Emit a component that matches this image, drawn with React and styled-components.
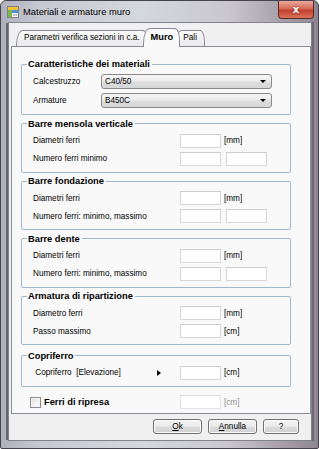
import React from 'react';
import styled, { createGlobalStyle } from 'styled-components';

const GlobalStyle = createGlobalStyle`
    html, body {
        margin: 0;
        padding: 0;
        background: #ffffff;
    }
    body {
        font-family: "Liberation Sans", Arial, sans-serif;
        font-size: 8.2px;
        color: #000;
    }
`;

const Window = styled.div`
    box-sizing: border-box;
    width: 319px;
    height: 449px;
    display: flex;
    flex-direction: column;
    padding: 0 6px 7px 7px;
    border: 1px solid #45444e;
    border-radius: 6px 6px 2px 2px;
    background: linear-gradient(90deg, #aeb1bc 0%, #c6c9d2 12%, #d5d7de 45%, #c9c6ce 72%, #8f8592 100%);
`;

const TitleBar = styled.div`
    display: flex;
    align-items: center;
    height: 21px;
    margin: 0 -6px 0 -7px;
    padding-left: 6px;
`;

const Title = styled.span`
    margin-left: 4px;
    font-size: 9.4px;
    color: #000;
`;

const CloseButton = styled.div`
    align-self: flex-start;
    margin: 0 4px 0 auto;
    width: 36px;
    height: 18px;
    box-sizing: border-box;
    display: flex;
    align-items: center;
    justify-content: center;
    border: 1px solid #5b2a28;
    border-top: none;
    border-radius: 0 0 4px 4px;
    background: linear-gradient(180deg, #e9a99c 0%, #d66a57 45%, #c2402e 55%, #d9745a 100%);
    color: #fff;
    font-weight: bold;
    font-size: 10px;
    font-family: "DejaVu Sans", sans-serif;
    text-shadow: 0 0 2px #5a1a10;
`;

const Client = styled.div`
    flex: 1;
    display: flex;
    flex-direction: column;
    padding: 4px 1px 0 1px;
    border: 1px solid #80838d;
    background: #f0f0f0;
    box-shadow: -3px 0 0 -1px #6a6470, 2px 0 0 0 #6f6774;
`;

const TabStrip = styled.div`
    display: flex;
    align-items: flex-end;
    height: 19px;
    padding-left: 6px;
`;

const Tab = styled.div`
    position: relative;
    box-sizing: border-box;
    height: ${(p) => (p.active ? '19px' : '16px')};
    margin-left: ${(p) => (p.first ? '0' : '-5px')};
    margin-bottom: ${(p) => (p.active ? '-1px' : '0')};
    padding: ${(p) => (p.active ? '3px 6px 0 7px' : '2px 7px 0 7px')};
    z-index: ${(p) => (p.active ? 2 : 1)};
    border: 1px solid #898c95;
    border-bottom: none;
    border-top-left-radius: 7px 15px;
    border-top-right-radius: 5px 12px;
    background: ${(p) => (p.active ? '#f9f9f9' : 'linear-gradient(180deg, #fbfbfb, #e9e9e9)')};
    font-weight: ${(p) => (p.active ? 'bold' : 'normal')};
    font-size: ${(p) => (p.active ? '9.3px' : '8.2px')};
    white-space: nowrap;
`;

const TabPanel = styled.div`
    box-sizing: border-box;
    width: 300px;
    height: 368px;
    margin-left: 1px;
    padding: 11px 0 0 9px;
    display: flex;
    flex-direction: column;
    gap: 2.5px;
    border: 1px solid #898c95;
    background: #f9f9f9;
`;

const Group = styled.fieldset`
    box-sizing: border-box;
    width: 270px;
    margin: 0;
    margin-top: ${(p) => p.extra || 0}px;
    padding: 4px 0 6px 11px;
    border: 1px solid #9fb8d2;
    border-radius: 2px;
    display: flex;
    flex-direction: column;
    gap: ${(p) => p.rowGap || 4}px;
`;

const Legend = styled.legend`
    margin-left: -6px;
    padding: 0 2px 0 1px;
    font-weight: bold;
    font-size: 9.3px;
    line-height: 12px;
`;

const Row = styled.div`
    display: flex;
    align-items: center;
    height: ${(p) => p.h || 14}px;
`;

const Label = styled.span`
    display: flex;
    align-items: center;
    flex-shrink: 0;
    width: ${(p) => p.w || 147}px;
    white-space: nowrap;
`;

const Pointer = styled.span`
    margin: 0 19px 0 auto;
    width: 0;
    height: 0;
    border-top: 3px solid transparent;
    border-bottom: 3px solid transparent;
    border-left: 4px solid #000;
`;

const TextBox = styled.div`
    box-sizing: border-box;
    width: 41px;
    height: 14px;
    margin-right: ${(p) => (p.spaced ? '5px' : '0')};
    border: 1px solid ${(p) => (p.disabled ? '#e3e3e3' : '#d6d7d9')};
    border-top-color: ${(p) => (p.disabled ? '#dcdcdc' : '#cbcdd0')};
    background: #fff;
`;

const Unit = styled.span`
    margin-left: 3px;
    color: ${(p) => (p.disabled ? '#8e8e8e' : '#000')};
`;

const Combo = styled.div`
    position: relative;
    box-sizing: border-box;
    width: 171px;
    height: 15px;
    display: flex;
    align-items: center;
    padding-left: 3px;
    border: 1px solid #8a8a8a;
    border-radius: 3px;
    background: linear-gradient(180deg, #f6f6f6 0%, #ebebeb 48%, #dedede 52%, #d6d6d6 100%);

    &::after {
        content: '';
        position: absolute;
        right: 5px;
        top: 5px;
        border-left: 3px solid transparent;
        border-right: 3px solid transparent;
        border-top: 3px solid #000;
    }
`;

const CheckRow = styled.div`
    display: flex;
    align-items: center;
    height: 14px;
    margin-top: 6px;
    padding-left: 9px;
`;

const CheckWrap = styled.label`
    display: flex;
    align-items: center;
    width: 150px;
    flex-shrink: 0;
    font-weight: bold;
    font-size: 9.3px;
`;

const CheckBox = styled.span`
    box-sizing: border-box;
    width: 11px;
    height: 11px;
    margin-right: 3px;
    border: 1px solid #8f8f8f;
    background: linear-gradient(135deg, #dcdcdc 0%, #f4f4f4 60%, #ffffff 100%);
    box-shadow: inset 0 0 0 1px #f2f2f2;
`;

const ButtonBar = styled.div`
    display: flex;
    justify-content: flex-end;
    gap: 6px;
    padding: 5px 11px 0 0;
`;

const Button = styled.div`
    box-sizing: border-box;
    width: ${(p) => p.w}px;
    height: 15px;
    display: flex;
    align-items: center;
    justify-content: center;
    border: 1px solid #707070;
    border-radius: 3px;
    background: linear-gradient(180deg, #f2f2f2 0%, #ebebeb 48%, #dddddd 52%, #cfcfcf 100%);
    box-shadow: inset 0 0 0 1px #fbfbfb;
`;

const AppIcon = () => (
    <svg width="12" height="12" viewBox="0 0 12 12">
        <rect x="0.5" y="0.5" width="11" height="11" fill="#f4f4f4" stroke="#7d8088" />
        <rect x="1" y="1" width="10" height="3" fill="#f2c230" />
        <rect x="1" y="4" width="4" height="7" fill="#79b84a" />
        <rect x="5" y="4" width="6" height="3" fill="#4f8fd6" />
        <rect x="6" y="8" width="4" height="2" fill="#c0c4cc" />
    </svg>
);

const FieldRow = ({ label, units, pair }) => (
    <Row>
        <Label>{label}</Label>
        <TextBox spaced={pair} />
        {pair ? <TextBox /> : <Unit>{units}</Unit>}
    </Row>
);

const BAR_GROUPS = [
    { title: 'Barre mensola verticale', second: 'Numero ferri minimo' },
    { title: 'Barre fondazione', second: 'Numero ferri: minimo, massimo' },
    { title: 'Barre dente', second: 'Numero ferri: minimo, massimo' },
];

const App = () => {
    return (
        <>
            <GlobalStyle />
            <Window>
                <TitleBar>
                    <AppIcon />
                    <Title>Materiali e armature muro</Title>
                    <CloseButton>x</CloseButton>
                </TitleBar>
                <Client>
                    <TabStrip>
                        <Tab first>Parametri verifica sezioni in c.a.</Tab>
                        <Tab active>Muro</Tab>
                        <Tab>Pali</Tab>
                    </TabStrip>
                    <TabPanel>
                        <Group rowGap={4}>
                            <Legend>Caratteristiche dei materiali</Legend>
                            <Row h={15}>
                                <Label w={68}>Calcestruzzo</Label>
                                <Combo>C40/50</Combo>
                            </Row>
                            <Row h={15}>
                                <Label w={68}>Armature</Label>
                                <Combo>B450C</Combo>
                            </Row>
                        </Group>
                        {BAR_GROUPS.map((g) => (
                            <Group key={g.title}>
                                <Legend>{g.title}</Legend>
                                <FieldRow label="Diametri ferri" units="[mm]" />
                                <FieldRow label={g.second} pair />
                            </Group>
                        ))}
                        <Group>
                            <Legend>Armatura di ripartizione</Legend>
                            <FieldRow label="Diametro ferri" units="[mm]" />
                            <FieldRow label="Passo massimo" units="[cm]" />
                        </Group>
                        <Group extra={2}>
                            <Legend>Copriferro</Legend>
                            <Row>
                                <Label>
                                    &nbsp;Copriferro&nbsp;&nbsp;[Elevazione]
                                    <Pointer />
                                </Label>
                                <TextBox />
                                <Unit>[cm]</Unit>
                            </Row>
                        </Group>
                        <CheckRow>
                            <CheckWrap>
                                <CheckBox />
                                Ferri di ripresa
                            </CheckWrap>
                            <TextBox disabled />
                            <Unit disabled>[cm]</Unit>
                        </CheckRow>
                    </TabPanel>
                    <ButtonBar>
                        <Button w={49}>
                            <span><u>O</u>k</span>
                        </Button>
                        <Button w={49}>
                            <span><u>A</u>nnulla</span>
                        </Button>
                        <Button w={36}>?</Button>
                    </ButtonBar>
                </Client>
            </Window>
        </>
    );
};

export default App;
